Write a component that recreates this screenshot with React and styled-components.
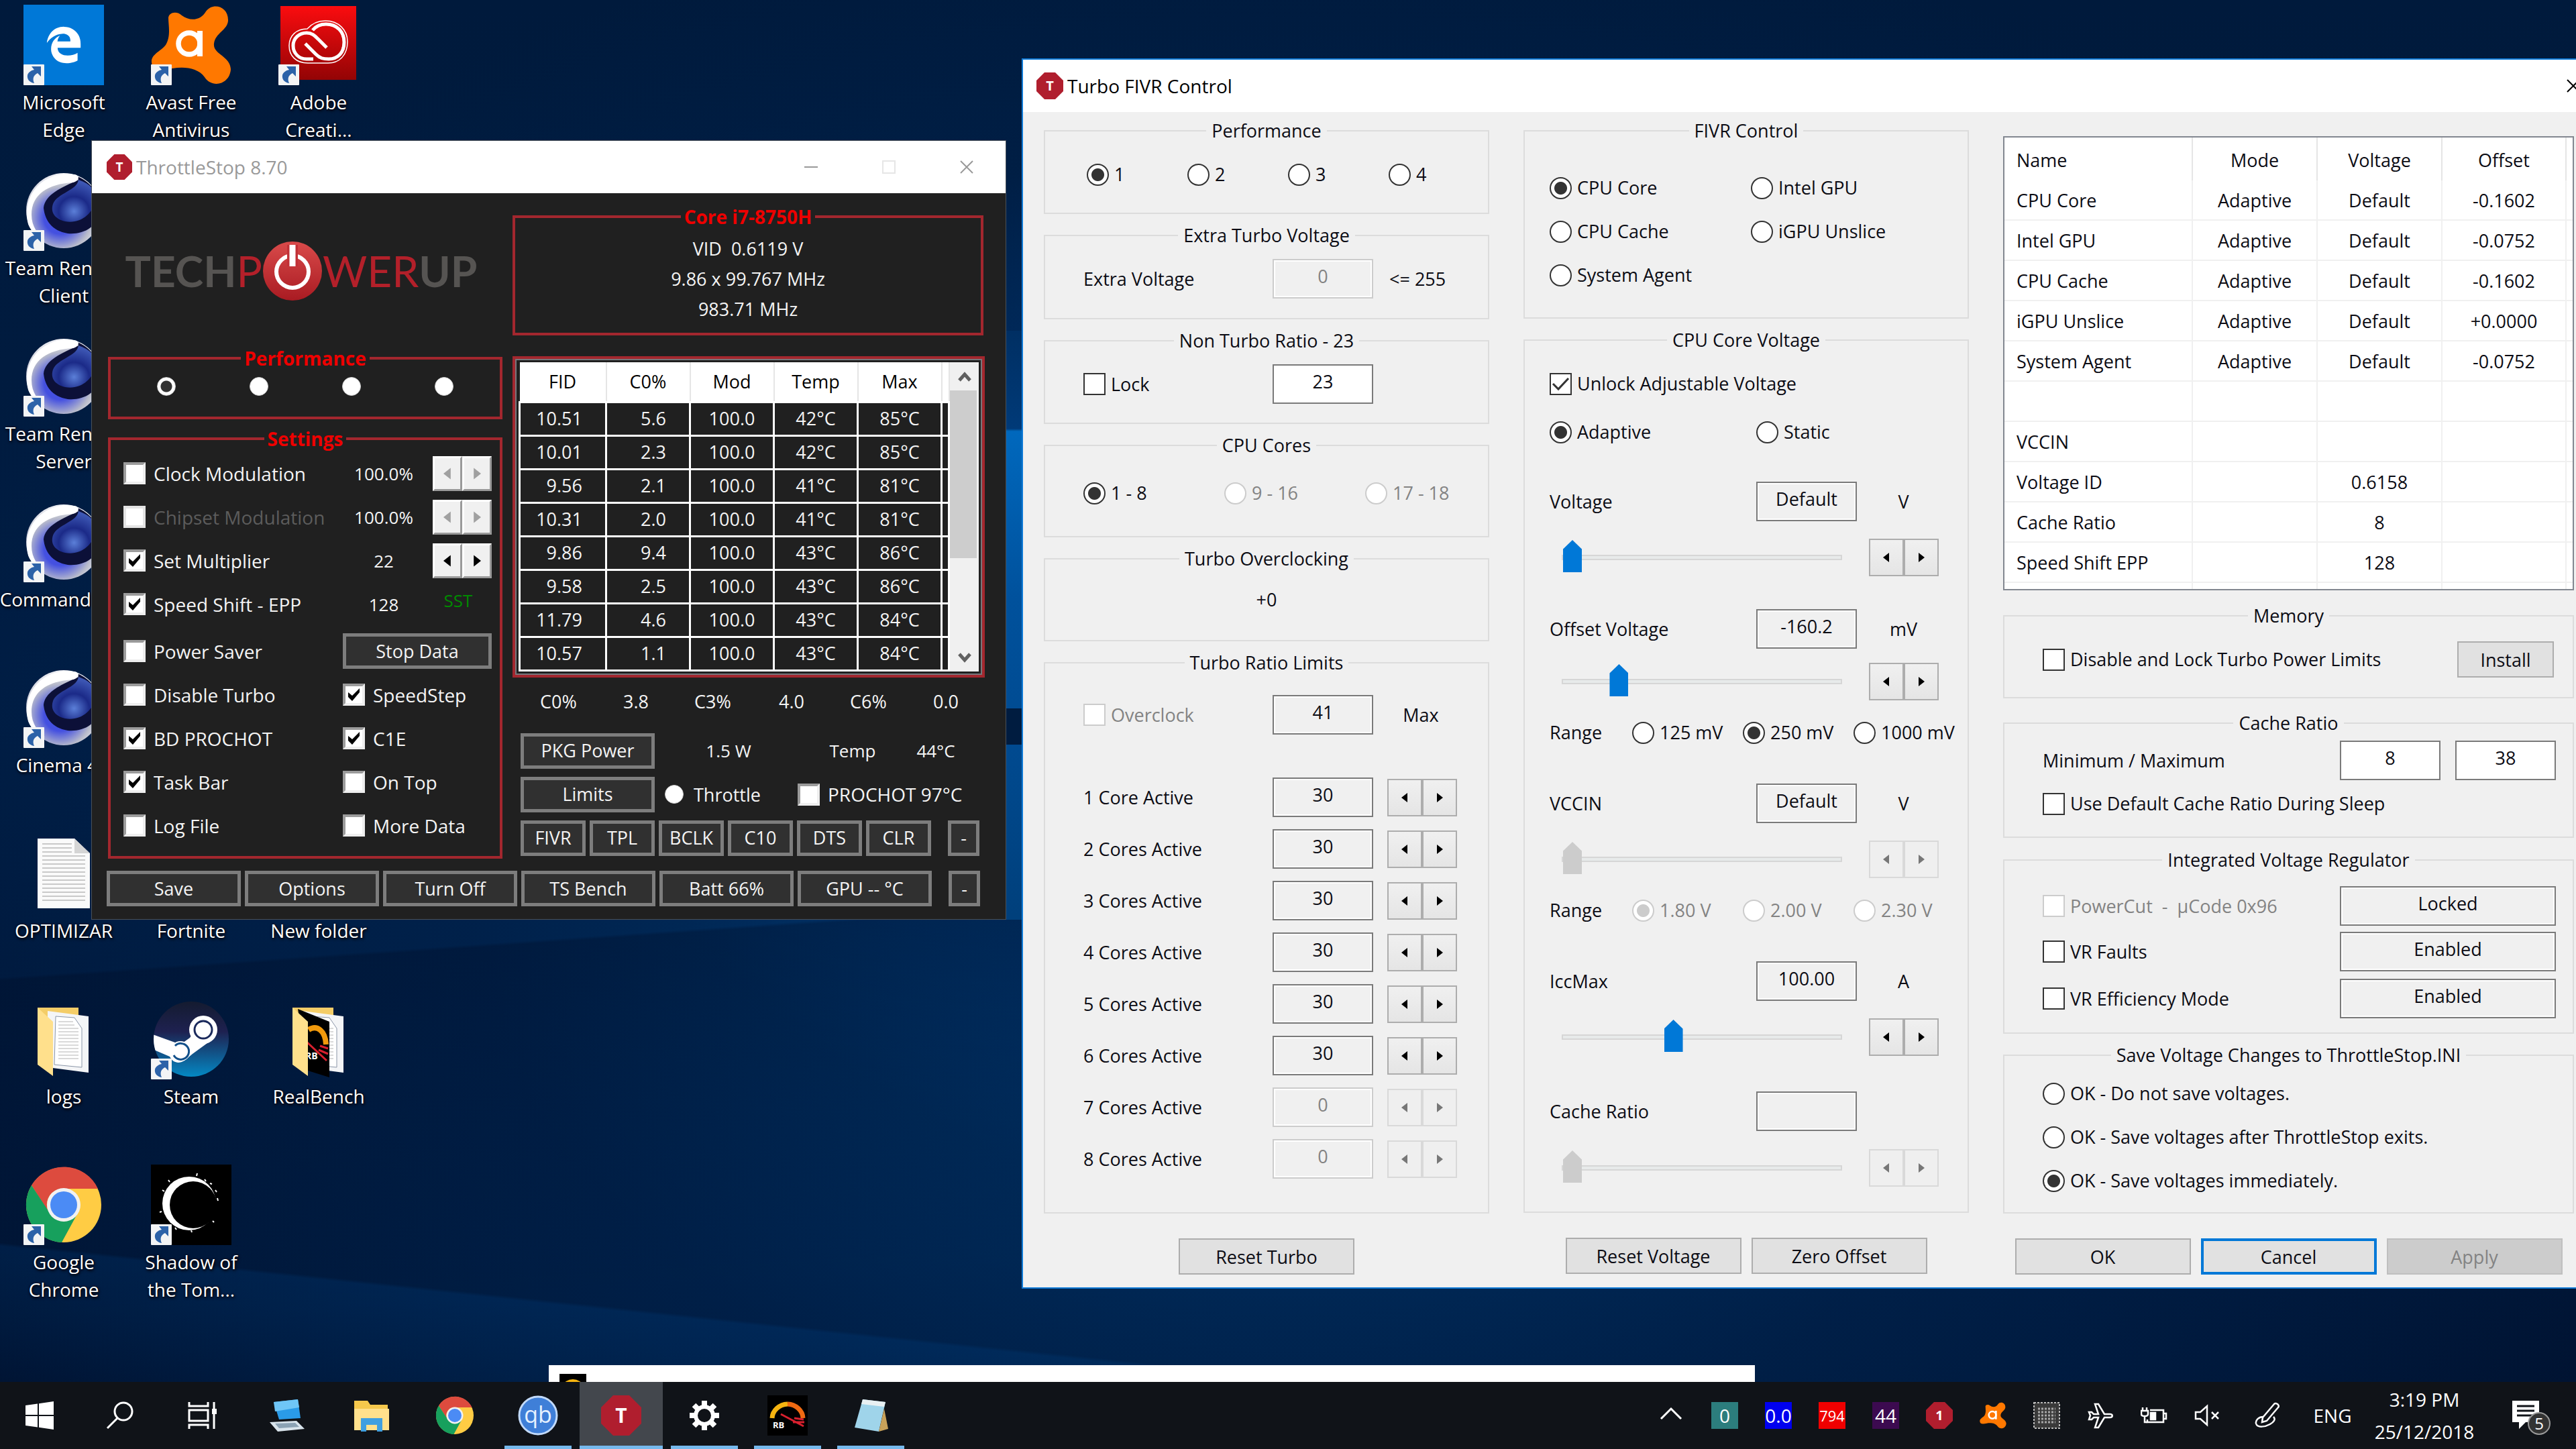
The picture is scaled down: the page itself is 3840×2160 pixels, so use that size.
import React from 'react';
import styled, { createGlobalStyle, css } from 'styled-components';
import { FaEdgeLegacy } from 'react-icons/fa';

const GlobalStyle = createGlobalStyle`
  * {
    box-sizing: border-box;
  }

  html,
  body {
    margin: 0;
    overflow: hidden;
    background: #001434;
  }

  body,
  button,
  input {
    font-family: 'Open Sans', 'Noto Sans', sans-serif;
    font-size: 27px;
  }
`;

/* ---------- desktop ---------- */

const Desktop = styled.main`
  position: relative;
  height: 100vh;
  min-height: 900px;
  overflow: hidden;
  background:
    linear-gradient(#001c40, #001c40) 1400px 1056px / 300px 54px no-repeat,
    linear-gradient(180deg, #002f63 0, #003a78 146px, #0068bd 150px, #00519c 400px, #004a90 620px, #00407c 870px) 1400px
      493px / 300px 878px no-repeat,
    linear-gradient(176deg, transparent 60%, rgba(0, 8, 30, 0.28) 60.2%, transparent 82%),
    linear-gradient(186deg, transparent 88%, rgba(0, 70, 140, 0.22) 88.2%, transparent 97%),
    radial-gradient(ellipse 1500px 900px at 62% 46%, #0068bd 0%, #00529c 40%, rgba(0, 52, 110, 0.6) 70%, transparent 100%),
    radial-gradient(ellipse 2200px 1500px at 50% 62%, #003a72 0%, rgba(0, 36, 80, 0.7) 55%, transparent 100%),
    linear-gradient(180deg, #001a3c 0%, #001c42 50%, #001230 100%);
`;

const IconGrid = styled.div`
  display: grid;
  grid-template-rows: repeat(8, 247px);
  grid-auto-columns: 190px;
  width: max-content;
`;

const Shortcut = styled.figure`
  grid-row: ${(p) => p.$row};
  grid-column: ${(p) => p.$col};
  display: flex;
  flex-direction: column;
  align-items: center;
  gap: 5px;
  margin: 0;
  padding-top: 7px;
`;

const IconBox = styled.div`
  position: relative;
  width: 120px;
  height: 120px;

  > svg {
    display: block;
    width: 120px;
    height: 120px;
  }
`;

const Badge = styled.span`
  position: absolute;
  left: 0;
  bottom: 0;
  width: 31px;
  height: 31px;
`;

const IconLabel = styled.figcaption`
  max-width: 210px;
  color: #fff;
  font-size: 28px;
  line-height: 41px;
  text-align: center;
  white-space: pre;
  text-shadow: 1px 2px 4px #000, 0 0 3px #000;
`;

const EdgeTile = styled.div`
  display: flex;
  align-items: center;
  justify-content: center;
  width: 120px;
  height: 120px;
  background: #0078d7;
  color: #fff;
  font-size: 56px;
`;

/* ---------- shared window parts ---------- */

const Window = styled.section`
  position: absolute;
  display: flex;
  flex-direction: column;
`;

const TitleBar = styled.header`
  display: flex;
  align-items: center;
  height: 78px;
  padding-left: ${(p) => p.$inset || 22}px;
  background: #fff;
`;

const Title = styled.h1`
  flex: 1;
  margin: 0 0 0 6px;
  font-size: 28px;
  font-weight: 400;
  color: ${(p) => (p.$inactive ? '#999' : '#000')};
`;

const CaptionButton = styled.button`
  display: flex;
  align-items: center;
  justify-content: center;
  width: ${(p) => p.$width || 116}px;
  height: 100%;
  padding: 0;
  border: 0;
  background: transparent;
  color: ${(p) => p.$color || '#999'};
`;

const Spin = styled.div`
  display: flex;
  justify-self: end;
  width: ${(p) => (p.$classic ? 88 : 104)}px;
  height: ${(p) => (p.$classic ? 52 : 56)}px;
`;

const SpinButton = styled.button`
  flex: 1;
  display: flex;
  align-items: center;
  justify-content: center;
  padding: 0;
  color: #000;

  &:disabled {
    color: #777;
  }

  ${(p) =>
    p.$classic
      ? css`
          border: 3px solid;
          border-color: #fff #9a9a9a #9a9a9a #fff;
          background: #f0f0f0;
          &:disabled {
            color: #a0a0a0;
          }

          svg {
            width: 12px;
            height: 20px;
          }
        `
      : css`
          border: 2px solid #adadad;
          background: linear-gradient(#f0f0f0, #e5e5e5);
          &:disabled {
            border-color: #d9d9d9;
            background: #efefef;
          }
        `}
`;

/* ---------- ThrottleStop ---------- */

const ThrottleWindow = styled(Window)`
  left: 136px;
  top: 209px;
  width: 1364px;
  border: 1px solid #4a5058;
  background: #202020;
  color: #f4f4f4;
`;

const ThrottleBody = styled.div`
  padding: 0 33px 19px 24px;
`;

const ThrottleColumns = styled.div`
  display: grid;
  grid-template-columns: 588px 1fr;
  gap: 15px;
`;

const ThrottleColumn = styled.div`
  display: flex;
  flex-direction: column;
  padding-top: ${(p) => p.$top || 0}px;
`;

const Brand = styled.div`
  display: flex;
  align-items: center;
  justify-content: center;
  height: 232px;
  margin-right: 12px;
  font-family: Lato, sans-serif;
  font-size: 64px;
  line-height: 64px;

  svg {
    width: 90px;
    height: 90px;
  }
`;

const BrandBold = styled.span`
  color: #565452;
  font-weight: 700;
`;

const BrandThin = styled.span`
  color: #b3202a;
  font-weight: 400;
`;

const RedFrame = styled.fieldset`
  min-width: 0;
  margin: 0 0 ${(p) => p.$after || 0}px;
  padding: 0;
  border: 4px solid #a3272e;

  legend {
    margin: 0 auto;
    padding: 0 5px;
    color: #ee0000;
    font-size: 28px;
    font-weight: 700;
    line-height: 28px;
  }
`;

const GroupBody = styled.div`
  padding: ${(p) => p.$pad};
`;

const ProfileRow = styled.div`
  display: flex;
  gap: 110px;
  height: 28px;
  align-items: center;
`;

const DarkRadio = styled.input`
  appearance: none;
  width: 28px;
  height: 28px;
  margin: 0;
  border-radius: 50%;
  border: 1px solid #ccc;
  background: #fff;

  &:checked {
    background: radial-gradient(circle, #333 0 8px, #fff 9px);
  }
`;

const SettingsRow = styled.div`
  display: grid;
  grid-template-columns: 1fr 122px 100px;
  align-items: center;
  height: 53px;
  margin-top: ${(p) => (p.$break ? 17 : 12)}px;

  &:first-of-type {
    margin-top: 0;
  }
`;

const DarkCheck = styled.label`
  display: flex;
  align-items: center;
  gap: 12px;
  font-size: 28px;
  line-height: 34px;
  white-space: nowrap;
  color: ${(p) => (p.$dim ? '#5c5c5c' : '#f4f4f4')};
  grid-column: ${(p) => p.$span || 'auto'};

  input[type='checkbox'] {
    appearance: none;
    width: 33px;
    height: 33px;
    margin: 0;
    border: 4px solid;
    border-color: #9b9b9b #eee #eee #9b9b9b;
    background: #fff;
  }

  input[type='checkbox']:disabled {
    border-color: #e4e4e4;
  }

  input[type='checkbox']:checked {
    background: #fff
      url("data:image/svg+xml,%3Csvg xmlns='http://www.w3.org/2000/svg' viewBox='0 0 25 25'%3E%3Cpath d='M4 9v7l6 6L21 9V3L10 14z' fill='%23000'/%3E%3C/svg%3E")
      center / contain no-repeat;
  }
`;

const Reading = styled.output`
  font-size: 26px;
  text-align: center;
  white-space: pre;
`;

const SpeedFlag = styled.span`
  justify-self: center;
  padding-bottom: 12px;
  color: #008a00;
  font-size: 26px;
`;

const DarkButton = styled.button`
  flex: none;
  width: ${(p) => p.$width || 200}px;
  height: 53px;
  padding: 0;
  border: 5px solid #7d7d7d;
  background: #303030;
  color: #f4f4f4;
  font-size: 27px;
  line-height: 40px;
  grid-column: ${(p) => p.$span || 'auto'};
`;

const CoreLine = styled.div`
  font-size: 27px;
  line-height: 45px;
  text-align: center;
  white-space: pre;
`;

const MonitorFrame = styled.div`
  display: flex;
  margin: 31px -2px 0 0;
  padding: 2px;
  border: 4px solid #a3272e;
  outline: 2px solid #77777c;
  outline-offset: -6px;
`;

const MonitorTable = styled.table`
  flex: 1;
  width: 100%;
  margin: 3px 0 3px 3px;
  border-collapse: collapse;
  table-layout: fixed;
  font-size: 27px;

  th {
    height: 59px;
    padding: 0;
    border-right: 2px solid #e5e5e5;
    background: #fff;
    color: #000;
    font-weight: 400;
  }

  td {
    height: 50px;
    padding: 0;
    border: 3px solid #fff;
    text-align: center;
    line-height: 30px;
  }

  td:nth-child(1),
  td:nth-child(2) {
    padding-right: 34px;
    text-align: right;
  }
`;

const ScrollTrack = styled.div`
  flex: none;
  display: flex;
  flex-direction: column;
  width: 43px;
  margin: 3px 3px 3px 0;
  background: #f0f0f0;
  color: #606060;

  svg {
    display: block;
    width: 22px;
    height: 42px;
    margin: 0 auto;
  }
`;

const ScrollThumb = styled.div`
  height: 250px;
  margin: 0 3px 0 0;
  background: #cdcdcd;
`;

const ScrollSpace = styled.div`
  flex: 1;
`;

const StateRow = styled.div`
  display: grid;
  grid-template-columns: 54px 176px 54px 178px 54px 1fr;
  margin: 16px 36px 0 41px;
  font-size: 27px;
  line-height: 40px;
`;

const StateValue = styled.output`
  padding-right: ${(p) => p.$gap || 68}px;
  text-align: right;
`;

const PowerRow = styled.div`
  display: grid;
  grid-template-columns: 200px ${(p) => p.$cols};
  align-items: center;
  height: 53px;
  margin: ${(p) => p.$top}px 0 0 12px;
`;

const ThrottleLabel = styled.label`
  display: flex;
  align-items: center;
  gap: 15px;
  padding-left: 15px;
`;

const ButtonRow = styled.div`
  display: flex;
  gap: ${(p) => p.$gap}px;
  margin: ${(p) => p.$margin};

  > :last-child {
    margin-left: 19px;
  }
`;

/* ---------- Turbo FIVR Control ---------- */

const FivrWindow = styled(Window)`
  left: 1523px;
  right: -32px;
  top: 87px;
  border: 2px solid #0f7ad6;
  background: #f0f0f0;
  color: #0c0c14;
`;

const FivrBody = styled.div`
  display: grid;
  grid-template-columns: 664fr 664fr 851fr;
  gap: 51px;
  padding: 14px 33px 19px 31px;
`;

const Column = styled.div`
  display: flex;
  flex-direction: column;
  min-width: 0;
`;

const GroupFrame = styled.fieldset`
  min-width: 0;
  margin: 0 0 ${(p) => p.$after || 18}px;
  padding: 0;
  border: 2px solid #dcdcdc;

  legend {
    margin: 0 auto;
    padding: 0 8px;
    line-height: 28px;
  }
`;

const Row = styled.div`
  display: grid;
  grid-template-columns: ${(p) => p.$cols || '1fr'};
  align-items: center;
  justify-content: start;
  height: ${(p) => p.$height || 52}px;
  margin-top: ${(p) => p.$top || 0}px;
  line-height: 36px;
`;

const WideRow = styled(Row)`
  justify-content: stretch;
`;

const CenterText = styled.span`
  text-align: center;
`;

const choiceBase = css`
  appearance: none;
  flex: none;
  width: 33px;
  height: 33px;
  margin: 0;
  border: 2px solid #333;
  background-color: #fff;
`;

const Choice = styled.label`
  display: flex;
  align-items: center;
  gap: 8px;
  white-space: pre;
  color: ${(p) => (p.$off ? '#838383' : 'inherit')};

  input[type='radio'] {
    ${choiceBase}
    border-radius: 50%;
  }

  input[type='radio']:checked {
    background-image: radial-gradient(circle, #333 0 9px, transparent 10px);
  }

  input[type='checkbox'] {
    ${choiceBase}
  }

  input[type='checkbox']:checked {
    background-image: url("data:image/svg+xml,%3Csvg xmlns='http://www.w3.org/2000/svg' viewBox='0 0 29 29'%3E%3Cpath d='M3 14l8 8L26 6' fill='none' stroke='%23333' stroke-width='3'/%3E%3C/svg%3E");
  }

  input:disabled {
    border-color: #ccc;
  }

  input[type='radio']:disabled:checked {
    background-image: radial-gradient(circle, #ccc 0 9px, transparent 10px);
  }
`;

const ValueBox = styled.input`
  width: ${(p) => p.$width || 150}px;
  height: 59px;
  padding: 0 0 9px;
  border: 2px solid #7a7a7a;
  background: ${(p) => (p.$editable ? '#fff' : '#f0f0f0')};
  box-shadow: inset 0 0 0 2px #fff;
  color: #0c0c14;
  text-align: center;

  &:disabled {
    border-color: #ccc;
    color: #838383;
  }
`;

const Slider = styled.input`
  appearance: none;
  width: 418px;
  height: 56px;
  margin: 0;
  background: transparent;

  &::-webkit-slider-runnable-track {
    height: 8px;
    border: 2px solid #d6d6d6;
    background: #e7eaea;
  }

  &::-webkit-slider-thumb {
    appearance: none;
    width: 28px;
    height: 48px;
    margin-top: -24px;
    background: ${(p) => (p.disabled ? '#ccc' : '#0078d7')};
    clip-path: polygon(50% 0, 100% 28%, 100% 100%, 0 100%, 0 28%);
  }
`;

const Push = styled.button`
  width: ${(p) => p.$width || 262}px;
  height: 54px;
  padding: 0;
  border: ${(p) => (p.$focus ? '4px solid #0078d7' : '2px solid #adadad')};
  background: #e1e1e1;
  color: #0c0c14;

  &:disabled {
    border-color: #bfbfbf;
    background: #ccc;
    color: #838383;
  }
`;

const Footer = styled.div`
  display: flex;
  justify-content: center;
  gap: 15px;
  margin-top: 19px;
`;

const VoltageTable = styled.table`
  width: 100%;
  margin: 22px 0 24px;
  border: 2px solid #828790;
  border-spacing: 0;
  table-layout: fixed;
  background: #fff;

  th {
    height: 64px;
    padding: 3px 0 0;
    border-right: 2px solid #e5e5e5;
    font-weight: 400;
  }

  td {
    height: 60px;
    padding: 0;
    border-right: 2px solid #f0f0f0;
    border-bottom: 2px solid #f0f0f0;
    text-align: center;
  }

  th:first-child,
  td:first-child {
    padding-left: 18px;
    text-align: left;
  }

  th:last-child,
  td:last-child {
    border-right: 0;
  }

  tfoot td {
    height: 9px;
    border-bottom: 0;
  }
`;

/* ---------- taskbar ---------- */

const Preview = styled.div`
  position: absolute;
  left: 818px;
  bottom: 100px;
  width: 1798px;
  height: 25px;
  padding: 13px 0 0 16px;
  overflow: hidden;
  background: #fff;
`;

const Taskbar = styled.footer`
  position: absolute;
  left: 0;
  right: 0;
  bottom: 0;
  display: flex;
  height: 100px;
  background: #101318;
  color: #fff;
`;

const TaskButton = styled.button`
  display: flex;
  align-items: center;
  justify-content: center;
  width: ${(p) => p.$width || 124}px;
  height: 100px;
  padding: 0;
  border: 0;
  background-color: ${(p) => (p.$active ? '#43474d' : 'transparent')};
  background-image: ${(p) => (p.$running ? 'linear-gradient(#76b9ed, #76b9ed)' : 'none')};
  background-size: ${(p) => (p.$active ? '100%' : '100px')} 5px;
  background-position: center bottom;
  background-repeat: no-repeat;
  color: #fff;

  svg {
    width: ${(p) => p.$icon || 60}px;
    height: ${(p) => p.$icon || 60}px;
  }
`;

const Tray = styled.div`
  display: flex;
  align-items: center;
  margin-left: auto;
`;

const TrayCell = styled.div`
  display: flex;
  align-items: center;
  justify-content: center;
  width: ${(p) => p.$width || 80}px;
  height: 100px;
  font-size: 28px;

  svg {
    width: ${(p) => p.$icon || 40}px;
    height: ${(p) => p.$icon || 40}px;
  }
`;

const Meter = styled.span`
  width: 40px;
  height: 40px;
  overflow: hidden;
  background: ${(p) => p.$bg};
  color: #fff;
  font-size: ${(p) => p.$size || 28}px;
  line-height: 40px;
  text-align: center;
`;

const Clock = styled.time`
  width: 182px;
  font-size: 28px;
  line-height: 48px;
  text-align: center;
`;

/* ---------- drawings ---------- */

const StopIcon = ({ size = 40, letter = 'T' }) => (
  <svg width={size} height={size} viewBox="0 0 40 40" aria-hidden="true">
    <path d="M12 0h16l12 12v16L28 40H12L0 28V12z" fill="#b01e2e" />
    <text x="20" y="27" textAnchor="middle" fill="#fff" fontSize="20" fontWeight="700" fontFamily="Open Sans">
      {letter}
    </text>
  </svg>
);

const ShortcutArrow = () => (
  <Badge>
    <svg width="31" height="31" viewBox="0 0 31 31" aria-hidden="true">
      <rect width="31" height="31" rx="1" fill="#f3f4f5" />
      <path d="M12 3H26V18L21 13C15 16 13 21 16 28C9 27 5 22 6 16C7 12 11 9 16 8Z" fill="#2c62a8" />
    </svg>
  </Badge>
);

const AvastMark = () => (
  <svg viewBox="0 0 120 120" aria-hidden="true">
    <path
      d="M26 19C28 10 40 10 46 16C58 25 74 24 82 10C92-4 116 2 115 24C114 38 96 42 94 58C92 74 118 76 119 96C118 118 92 126 80 108C70 94 50 92 32 95C16 98 2 100 1 86C0 74 14 70 22 60C30 46 26 32 26 19Z"
      fill="#ff7800"
    />
    <circle cx="57" cy="58" r="16" fill="none" stroke="#fff" strokeWidth="7.5" />
    <path d="M73 39v38" stroke="#fff" strokeWidth="8" />
  </svg>
);

const CloudMark = () => (
  <svg viewBox="0 0 120 120" aria-hidden="true">
    <defs>
      <linearGradient id="cc" x1="0" y1="0" x2="0" y2="1">
        <stop offset="0" stopColor="#fb0c0f" />
        <stop offset="1" stopColor="#930405" />
      </linearGradient>
    </defs>
    <rect x="3" y="2" width="113" height="110" fill="url(#cc)" />
    <g fill="none" stroke="#fff">
      <path d="M44 87C26 87 16 76 16 61C16 46 27 36 43 36C50 28 59 24 70 24C90 24 103 38 103 55C103 74 92 87 74 87Z" strokeWidth="1.5" />
      <path d="M52 81H42C30 81 22 72 22 61C22 50 31 42 42 42C51 42 55 47 59 51L72 64" strokeWidth="5" />
      <path d="M40 58L56 74C62 80 67 81 75 81C89 81 98 71 98 56C98 40 87 29 71 29C63 29 56 32 51 38" strokeWidth="5" />
    </g>
  </svg>
);

const CinemaMark = () => (
  <svg viewBox="0 0 120 120" aria-hidden="true">
    <defs>
      <radialGradient id="c4rim" cx="0.45" cy="0.6" r="0.6">
        <stop offset="0.35" stopColor="#4450e0" />
        <stop offset="0.7" stopColor="#b9bccb" />
        <stop offset="1" stopColor="#f4f4f8" />
      </radialGradient>
      <radialGradient id="c4eye" cx="0.5" cy="0.75" r="0.7">
        <stop offset="0" stopColor="#5b7fd8" />
        <stop offset="0.5" stopColor="#1b2a88" />
        <stop offset="1" stopColor="#3d57b4" />
      </radialGradient>
    </defs>
    <circle cx="60" cy="60" r="56" fill="url(#c4rim)" />
    <path d="M78 8C104 18 116 40 114 62C110 84 90 96 66 94C42 90 32 74 30 56C32 36 56 26 82 14Z" fill="#0c1038" />
    <path d="M82 14C100 20 108 30 108 42C104 66 84 80 62 76C46 72 40 62 44 50C50 34 80 30 82 14Z" fill="url(#c4eye)" />
    <path d="M6 76C-2 34 32 0 76 6C86 8 82 16 74 18C36 20 12 36 12 66C12 84 22 96 32 104C18 98 8 88 6 76Z" fill="#fff" />
  </svg>
);

const DocMark = () => (
  <svg viewBox="0 0 120 120" aria-hidden="true">
    <path d="M21 8H76L99 30V112H21Z" fill="#fafafa" />
    <path d="M76 8V30H99Z" fill="#d5d5d5" />
    <path d="M28 16H72M28 22H72M28 28H72M28 34H92M28 40H92M28 46H92M28 52H92M28 58H92M28 64H92M28 70H92M28 76H92M28 82H92M28 88H92M28 94H92M28 100H92" stroke="#b9b9b9" strokeWidth="1.5" />
  </svg>
);

const FolderMark = ({ dark }) => (
  <svg viewBox="0 0 120 120" aria-hidden="true">
    <path d="M21 13H82V105L50 100L21 98Z" fill="#f4cd68" />
    <path d="M36 18L97 26V110L36 102Z" fill="#f4f5f7" />
    <path d="M48 26L76 28L87 44V102L46 98Z" fill="#fff" stroke="#8b96a8" strokeWidth="1" />
    <path d="M52 34H74M52 39H76M52 44H82M52 49H82M52 54H82M52 59H82M52 64H82M52 69H82M52 74H82M52 79H82M52 84H82M52 89H82" stroke="#b4b4b4" strokeWidth="1.2" />
    {dark && (
      <g>
        <path d="M29 15L76 34V117L44 107Z" fill="#000" />
        <path d="M45 46C58 38 70 48 71 68" fill="none" stroke="#f29a0c" strokeWidth="8" />
        <path d="M42 64L72 92M60 76L74 82M62 70L74 74" stroke="#d8202e" strokeWidth="3" />
        <text x="40" y="90" fill="#fff" fontSize="14" fontWeight="700" fontFamily="Open Sans">RB</text>
      </g>
    )}
    <path d="M21 13L44 34V115L21 98Z" fill="#ffe08c" />
  </svg>
);

const SteamMark = () => (
  <svg viewBox="0 0 120 120" aria-hidden="true">
    <defs>
      <linearGradient id="st" x1="0" y1="0" x2="0" y2="1">
        <stop offset="0" stopColor="#141b30" />
        <stop offset="0.4" stopColor="#1e2150" />
        <stop offset="1" stopColor="#0489c4" />
      </linearGradient>
      <clipPath id="stc">
        <circle cx="60" cy="60" r="56" />
      </clipPath>
    </defs>
    <circle cx="60" cy="60" r="56" fill="url(#st)" />
    <g clipPath="url(#stc)">
      <path d="M0 52L44 68L58 58L68 42L84 66L62 82L50 92C40 98 32 94 28 86L0 74Z" fill="#fff" />
      <circle cx="78" cy="46" r="21" fill="#fff" />
      <circle cx="78" cy="46" r="13" fill="#fff" stroke="#1b2a5c" strokeWidth="3" />
      <circle cx="44" cy="78" r="15" fill="#fff" />
      <path d="M36 70A12 12 0 1 1 34 84" fill="none" stroke="#12508a" strokeWidth="3" />
    </g>
  </svg>
);

const ChromeMark = () => (
  <svg viewBox="0 0 120 120" aria-hidden="true">
    <circle cx="60" cy="60" r="56" fill="#fc4" />
    <path d="M12 31A56 56 0 0 1 111 36H60A24 24 0 0 0 38 72Z" fill="#dd4b3e" />
    <path d="M12 31L39 72A24 24 0 0 0 68 83L81 72L57 116A56 56 0 0 1 12 31Z" fill="#17a05d" />
    <circle cx="60" cy="60" r="25" fill="#f1f1f1" />
    <circle cx="60" cy="60" r="20" fill="#4b8bf5" />
  </svg>
);

const EclipseMark = () => (
  <svg viewBox="0 0 120 120" aria-hidden="true">
    <rect width="120" height="120" fill="#000" />
    <circle cx="57" cy="58" r="40" fill="#fff" />
    <circle cx="63" cy="60" r="35" fill="#000" />
    <path d="M80 22l2 3M88 28l3 1M96 38l2 3M99 50l1 4M92 84l2 2M36 94l2 3M60 98l1 3M20 40l-3-2M16 70l-3 1M68 17l1-4M28 26l-2-3" stroke="#fff" strokeWidth="2" />
  </svg>
);

const PowerMark = () => (
  <svg viewBox="0 0 90 90" aria-hidden="true">
    <defs>
      <linearGradient id="pw" x1="0" y1="0" x2="0" y2="1">
        <stop offset="0" stopColor="#d94a4a" />
        <stop offset="1" stopColor="#a91b22" />
      </linearGradient>
    </defs>
    <circle cx="45" cy="45" r="44" fill="url(#pw)" />
    <circle cx="45" cy="46" r="24" fill="none" stroke="#fff" strokeWidth="6" />
    <path d="M45 6V38" stroke="#c13036" strokeWidth="16" />
    <path d="M45 6V38" stroke="#fff" strokeWidth="9" />
  </svg>
);

const GaugeMark = () => (
  <svg viewBox="0 0 60 60" aria-hidden="true">
    <rect width="60" height="60" fill="#000" />
    <path d="M7 34A24 22 0 0 1 30 13" fill="none" stroke="#f6b410" strokeWidth="7" />
    <path d="M30 13A24 22 0 0 1 53 34" fill="none" stroke="#f06a12" strokeWidth="7" />
    <path d="M20 28L54 46M38 40L55 40M40 34L54 36" stroke="#d8202e" strokeWidth="3" />
    <text x="8" y="49" fill="#fff" fontSize="13" fontWeight="700" fontFamily="Open Sans">RB</text>
  </svg>
);

const Arrows = ({ classic, disabled, name }) => (
  <Spin $classic={classic}>
    <SpinButton $classic={classic} disabled={disabled} aria-label={`Decrease ${name}`}>
      <svg width="10" height="14" viewBox="0 0 10 14" aria-hidden="true">
        <path d="M9 0V14L0 7Z" fill="currentColor" />
      </svg>
    </SpinButton>
    <SpinButton $classic={classic} disabled={disabled} aria-label={`Increase ${name}`}>
      <svg width="10" height="14" viewBox="0 0 10 14" aria-hidden="true">
        <path d="M1 0V14L10 7Z" fill="currentColor" />
      </svg>
    </SpinButton>
  </Spin>
);

const CloseGlyph = () => (
  <svg width="20" height="20" viewBox="0 0 20 20" aria-hidden="true">
    <path d="M1 1L19 19M19 1L1 19" stroke="currentColor" strokeWidth="2" />
  </svg>
);

/* ---------- data ---------- */

const shortcuts = [
  { col: 1, row: 1, label: 'Microsoft\nEdge', icon: <EdgeTile><FaEdgeLegacy /></EdgeTile>, link: true },
  { col: 1, row: 2, label: 'Team Render\nClient', icon: <CinemaMark />, link: true },
  { col: 1, row: 3, label: 'Team Render\nServer', icon: <CinemaMark />, link: true },
  { col: 1, row: 4, label: 'CommandLine', icon: <CinemaMark />, link: true },
  { col: 1, row: 5, label: 'Cinema 4D', icon: <CinemaMark />, link: true },
  { col: 1, row: 6, label: 'OPTIMIZAR', icon: <DocMark /> },
  { col: 1, row: 7, label: 'logs', icon: <FolderMark /> },
  { col: 1, row: 8, label: 'Google\nChrome', icon: <ChromeMark />, link: true },
  { col: 2, row: 1, label: 'Avast Free\nAntivirus', icon: <AvastMark />, link: true },
  { col: 2, row: 6, label: 'Fortnite' },
  { col: 2, row: 7, label: 'Steam', icon: <SteamMark />, link: true },
  { col: 2, row: 8, label: 'Shadow of\nthe Tom...', icon: <EclipseMark />, link: true },
  { col: 3, row: 1, label: 'Adobe\nCreati...', icon: <CloudMark />, link: true },
  { col: 3, row: 6, label: 'New folder' },
  { col: 3, row: 7, label: 'RealBench', icon: <FolderMark dark /> },
];

const modulation = [
  { label: 'Clock Modulation', value: '100.0%', disabled: true },
  { label: 'Chipset Modulation', value: '100.0%', disabled: true, dim: true },
  { label: 'Set Multiplier', value: '22', on: true },
];

const toggles = [
  [{ label: 'Disable Turbo' }, { label: 'SpeedStep', on: true }],
  [{ label: 'BD PROCHOT', on: true }, { label: 'C1E', on: true }],
  [{ label: 'Task Bar', on: true }, { label: 'On Top' }],
  [{ label: 'Log File' }, { label: 'More Data' }],
];

const threads = [
  ['10.51', '5.6', '100.0', '42°C', '85°C'],
  ['10.01', '2.3', '100.0', '42°C', '85°C'],
  ['9.56', '2.1', '100.0', '41°C', '81°C'],
  ['10.31', '2.0', '100.0', '41°C', '81°C'],
  ['9.86', '9.4', '100.0', '43°C', '86°C'],
  ['9.58', '2.5', '100.0', '43°C', '86°C'],
  ['11.79', '4.6', '100.0', '43°C', '84°C'],
  ['10.57', '1.1', '100.0', '43°C', '84°C'],
];

const voltages = [
  ['CPU Core', 'Adaptive', 'Default', '-0.1602'],
  ['Intel GPU', 'Adaptive', 'Default', '-0.0752'],
  ['CPU Cache', 'Adaptive', 'Default', '-0.1602'],
  ['iGPU Unslice', 'Adaptive', 'Default', '+0.0000'],
  ['System Agent', 'Adaptive', 'Default', '-0.0752'],
  ['', '', '', ''],
  ['VCCIN', '', '', ''],
  ['Voltage ID', '', '0.6158', ''],
  ['Cache Ratio', '', '8', ''],
  ['Speed Shift EPP', '', '128', ''],
];

const coreRatios = [30, 30, 30, 30, 30, 30, 0, 0];

/* ---------- pieces ---------- */

const Group = ({ title, pad, after, children }) => (
  <GroupFrame $after={after}>
    <legend>{title}</legend>
    <GroupBody $pad={pad}>{children}</GroupBody>
  </GroupFrame>
);

const RedGroup = ({ title, pad, after, children }) => (
  <RedFrame $after={after}>
    <legend>{title}</legend>
    <GroupBody $pad={pad}>{children}</GroupBody>
  </RedFrame>
);

const Radio = ({ name, label, checked, disabled }) => (
  <Choice $off={disabled}>
    <input type="radio" name={name} defaultChecked={checked} disabled={disabled} />
    {label}
  </Choice>
);

const Check = ({ label, checked, disabled }) => (
  <Choice $off={disabled}>
    <input type="checkbox" defaultChecked={checked} disabled={disabled} />
    {label}
  </Choice>
);

const Toggle = ({ label, on, dim, span }) => (
  <DarkCheck $dim={dim} $span={span}>
    <input type="checkbox" defaultChecked={on} disabled={dim} />
    {label}
  </DarkCheck>
);

const VoltageControl = ({ label, value, unit, position, disabled, top, mid }) => (
  <>
    <Row $cols="308px 150px 139px" $height={59} $top={top}>
      <label htmlFor={`box-${label}`}>{label}</label>
      <ValueBox id={`box-${label}`} readOnly defaultValue={value} />
      <CenterText>{unit}</CenterText>
    </Row>
    <Row $cols="18px 458px 104px" $height={56} $top={mid}>
      <span />
      <Slider type="range" aria-label={label} defaultValue={position} disabled={disabled} />
      <Arrows name={label} disabled={disabled} />
    </Row>
  </>
);

function ThrottleStop() {
  return (
    <ThrottleWindow>
      <TitleBar>
        <StopIcon size={38} />
        <Title $inactive>ThrottleStop 8.70</Title>
        <CaptionButton aria-label="Minimize">
          <svg width="20" height="20" viewBox="0 0 20 20" aria-hidden="true">
            <path d="M0 10H20" stroke="currentColor" strokeWidth="2" />
          </svg>
        </CaptionButton>
        <CaptionButton $color="#e6e6e6" aria-label="Maximize">
          <svg width="20" height="20" viewBox="0 0 20 20" aria-hidden="true">
            <rect x="1" y="1" width="18" height="18" fill="none" stroke="currentColor" strokeWidth="2" />
          </svg>
        </CaptionButton>
        <CaptionButton aria-label="Close">
          <CloseGlyph />
        </CaptionButton>
      </TitleBar>
      <ThrottleBody>
        <ThrottleColumns>
          <ThrottleColumn>
            <Brand>
              <BrandBold>TECH</BrandBold>
              <BrandThin>P</BrandThin>
              <PowerMark />
              <BrandThin>WER</BrandThin>
              <BrandBold>UP</BrandBold>
            </Brand>
            <RedGroup title="Performance" pad="14px 0 31px 69px" after={15}>
              <ProfileRow>
                {[1, 2, 3, 4].map((n) => (
                  <DarkRadio key={n} type="radio" name="profile" aria-label={`Profile ${n}`} defaultChecked={n === 1} />
                ))}
              </ProfileRow>
            </RedGroup>
            <RedGroup title="Settings" pad="11px 12px 19px 19px">
              {modulation.map((m) => (
                <SettingsRow key={m.label}>
                  <Toggle {...m} />
                  <Reading>{m.value}</Reading>
                  <Arrows classic name={m.label} disabled={m.disabled} />
                </SettingsRow>
              ))}
              <SettingsRow>
                <Toggle label="Speed Shift - EPP" on />
                <Reading>128</Reading>
                <SpeedFlag>SST</SpeedFlag>
              </SettingsRow>
              <SettingsRow $break>
                <Toggle label="Power Saver" />
                <DarkButton $width={222} $span="2 / 4">Stop Data</DarkButton>
              </SettingsRow>
              {toggles.map(([left, right]) => (
                <SettingsRow key={left.label}>
                  <Toggle {...left} />
                  <Toggle {...right} span="2 / 4" />
                </SettingsRow>
              ))}
            </RedGroup>
          </ThrottleColumn>

          <ThrottleColumn $top={21}>
            <RedGroup title="Core i7-8750H" pad="11px 0 13px">
              <CoreLine>VID  0.6119 V</CoreLine>
              <CoreLine>9.86 x 99.767 MHz</CoreLine>
              <CoreLine>983.71 MHz</CoreLine>
            </RedGroup>
            <MonitorFrame>
              <MonitorTable>
                <colgroup>
                  <col width="129" />
                  <col width="125" />
                  <col width="125" />
                  <col width="125" />
                  <col width="125" />
                  <col />
                </colgroup>
                <thead>
                  <tr>
                    <th>FID</th>
                    <th>C0%</th>
                    <th>Mod</th>
                    <th>Temp</th>
                    <th>Max</th>
                    <th aria-label="More" />
                  </tr>
                </thead>
                <tbody>
                  {threads.map((t, i) => (
                    <tr key={i}>
                      {t.map((v, j) => (
                        <td key={j}>{v}</td>
                      ))}
                      <td />
                    </tr>
                  ))}
                </tbody>
              </MonitorTable>
              <ScrollTrack>
                <svg viewBox="0 0 22 42" aria-hidden="true">
                  <path d="M3 27L11 18L19 27" fill="none" stroke="currentColor" strokeWidth="5" />
                </svg>
                <ScrollThumb />
                <ScrollSpace />
                <svg viewBox="0 0 22 42" aria-hidden="true">
                  <path d="M3 16L11 25L19 16" fill="none" stroke="currentColor" strokeWidth="5" />
                </svg>
              </ScrollTrack>
            </MonitorFrame>
            <StateRow>
              <span>C0%</span>
              <StateValue>3.8</StateValue>
              <span>C3%</span>
              <StateValue>4.0</StateValue>
              <span>C6%</span>
              <StateValue $gap={1}>0.0</StateValue>
            </StateRow>
            <PowerRow $cols="220px 150px 98px" $top={27}>
              <DarkButton>PKG Power</DarkButton>
              <Reading>1.5 W</Reading>
              <Reading as="span">Temp</Reading>
              <Reading>44°C</Reading>
            </PowerRow>
            <PowerRow $cols="213px 1fr" $top={12}>
              <DarkButton>Limits</DarkButton>
              <ThrottleLabel>
                <DarkRadio type="radio" name="throttle" />
                Throttle
              </ThrottleLabel>
              <Toggle label="PROCHOT 97°C" />
            </PowerRow>
            <ButtonRow $gap={6} $margin="12px 0 0 12px">
              {['FIVR', 'TPL', 'BCLK', 'C10', 'DTS', 'CLR'].map((b) => (
                <DarkButton key={b} $width={97}>{b}</DarkButton>
              ))}
              <DarkButton $width={47}>-</DarkButton>
            </ButtonRow>
          </ThrottleColumn>
        </ThrottleColumns>
        <ButtonRow $gap={6} $margin="18px 0 0 -2px">
          {['Save', 'Options', 'Turn Off', 'TS Bench', 'Batt 66%', 'GPU -- °C'].map((b) => (
            <DarkButton key={b}>{b}</DarkButton>
          ))}
          <DarkButton $width={47}>-</DarkButton>
        </ButtonRow>
      </ThrottleBody>
    </ThrottleWindow>
  );
}

function TurboColumn() {
  return (
    <Column>
      <Group title="Performance" pad="25px 0 31px 62px">
        <Row $cols="repeat(4, 150px)">
          {['1', '2', '3', '4'].map((n) => (
            <Radio key={n} name="perf" label={n} checked={n === '1'} />
          ))}
        </Row>
      </Group>
      <Group title="Extra Turbo Voltage" pad="21px 0 29px 57px">
        <Row $cols="282px 174px auto" $height={59}>
          <label htmlFor="extra">Extra Voltage</label>
          <ValueBox id="extra" disabled defaultValue="0" />
          <span>&lt;= 255</span>
        </Row>
      </Group>
      <Group title="Non Turbo Ratio - 23" pad="21px 0 28px 57px">
        <Row $cols="282px 150px" $height={59}>
          <Check label="Lock" />
          <ValueBox $editable aria-label="Non turbo ratio" defaultValue="23" />
        </Row>
      </Group>
      <Group title="CPU Cores" pad="31px 0 38px 57px">
        <Row $cols="repeat(3, 210px)">
          <Radio name="cores" label="1 - 8" checked />
          <Radio name="cores" label="9 - 16" disabled />
          <Radio name="cores" label="17 - 18" disabled />
        </Row>
      </Group>
      <Group title="Turbo Overclocking" pad="21px 0 34px">
        <WideRow>
          <CenterText>+0</CenterText>
        </WideRow>
      </Group>
      <Group title="Turbo Ratio Limits" pad="34px 0 50px 57px">
        <Row $cols="282px 150px 142px" $height={59}>
          <Check label="Overclock" disabled />
          <ValueBox readOnly aria-label="Maximum ratio" defaultValue="41" />
          <CenterText>Max</CenterText>
        </Row>
        {coreRatios.map((ratio, i) => (
          <Row key={i} $cols="282px 171px 104px" $height={59} $top={i === 0 ? 64 : 18}>
            <label htmlFor={`ratio-${i}`}>{i === 0 ? '1 Core Active' : `${i + 1} Cores Active`}</label>
            <ValueBox id={`ratio-${i}`} readOnly disabled={!ratio} defaultValue={ratio} />
            <Arrows name={`ratio ${i + 1}`} disabled={!ratio} />
          </Row>
        ))}
      </Group>
      <Footer>
        <Push>Reset Turbo</Push>
      </Footer>
    </Column>
  );
}

function VoltageColumn() {
  return (
    <Column>
      <Group title="FIVR Control" pad="45px 0 37px 37px">
        <Row $cols="300px auto">
          <Radio name="plane" label="CPU Core" checked />
          <Radio name="plane" label="Intel GPU" />
        </Row>
        <Row $cols="300px auto" $top={13}>
          <Radio name="plane" label="CPU Cache" />
          <Radio name="plane" label="iGPU Unslice" />
        </Row>
        <Row $top={13}>
          <Radio name="plane" label="System Agent" />
        </Row>
      </Group>
      <Group title="CPU Core Voltage" pad="25px 0 37px 37px">
        <Row>
          <Check label="Unlock Adjustable Voltage" checked />
        </Row>
        <Row $cols="308px auto" $top={20}>
          <Radio name="mode" label="Adaptive" checked />
          <Radio name="mode" label="Static" />
        </Row>
        <VoltageControl label="Voltage" value="Default" unit="V" position={0} top={48} mid={26} />
        <VoltageControl label="Offset Voltage" value="-160.2" unit="mV" position={18} top={49} mid={21} />
        <Row $cols="123px 165px 165px auto" $top={22}>
          <span>Range</span>
          <Radio name="range" label="125 mV" />
          <Radio name="range" label="250 mV" checked />
          <Radio name="range" label="1000 mV" />
        </Row>
        <VoltageControl label="VCCIN" value="Default" unit="V" position={0} disabled top={50} mid={26} />
        <Row $cols="123px 165px 165px auto" $top={22}>
          <span>Range</span>
          <Radio name="vrange" label="1.80 V" checked disabled />
          <Radio name="vrange" label="2.00 V" disabled />
          <Radio name="vrange" label="2.30 V" disabled />
        </Row>
        <VoltageControl label="IccMax" value="100.00" unit="A" position={39} top={50} mid={26} />
        <VoltageControl label="Cache Ratio" value="" unit="" position={0} disabled top={53} mid={27} />
      </Group>
      <Footer>
        <Push>Reset Voltage</Push>
        <Push>Zero Offset</Push>
      </Footer>
    </Column>
  );
}

function SummaryColumn() {
  return (
    <Column>
      <VoltageTable>
        <colgroup>
          <col width="281" />
          <col width="186" />
          <col width="186" />
          <col width="185" />
          <col />
        </colgroup>
        <thead>
          <tr>
            <th>Name</th>
            <th>Mode</th>
            <th>Voltage</th>
            <th>Offset</th>
            <th aria-label="More" />
          </tr>
        </thead>
        <tbody>
          {voltages.map((v, i) => (
            <tr key={i}>
              {v.map((cell, j) => (
                <td key={j}>{cell}</td>
              ))}
              <td />
            </tr>
          ))}
        </tbody>
        <tfoot>
          <tr>
            <td />
            <td />
            <td />
            <td />
            <td />
          </tr>
        </tfoot>
      </VoltageTable>
      <Group title="Memory" pad="24px 28px 29px 57px" after={23}>
        <WideRow $cols="1fr 144px" $height={54}>
          <Check label="Disable and Lock Turbo Power Limits" />
          <Push $width={144}>Install</Push>
        </WideRow>
      </Group>
      <Group title="Cache Ratio" pad="12px 25px 23px 57px" after={19}>
        <WideRow $cols="1fr 172px 150px" $height={59}>
          <span>Minimum / Maximum</span>
          <ValueBox $editable aria-label="Minimum cache ratio" defaultValue="8" />
          <ValueBox $editable aria-label="Maximum cache ratio" defaultValue="38" />
        </WideRow>
        <Row $top={9}>
          <Check label="Use Default Cache Ratio During Sleep" />
        </Row>
      </Group>
      <Group title="Integrated Voltage Regulator" pad="25px 25px 21px 57px">
        <WideRow $cols="1fr 322px" $height={59}>
          <Check label="PowerCut  -  µCode 0x96" disabled />
          <ValueBox $width={322} readOnly aria-label="PowerCut state" defaultValue="Locked" />
        </WideRow>
        <WideRow $cols="1fr 322px" $height={59} $top={9}>
          <Check label="VR Faults" />
          <ValueBox $width={322} readOnly aria-label="VR Faults state" defaultValue="Enabled" />
        </WideRow>
        <WideRow $cols="1fr 322px" $height={59} $top={11}>
          <Check label="VR Efficiency Mode" />
          <ValueBox $width={322} readOnly aria-label="VR Efficiency state" defaultValue="Enabled" />
        </WideRow>
      </Group>
      <Group title="Save Voltage Changes to ThrottleStop.INI" pad="17px 0 21px 57px">
        <Row>
          <Radio name="save" label="OK - Do not save voltages." />
        </Row>
        <Row $top={13}>
          <Radio name="save" label="OK - Save voltages after ThrottleStop exits." />
        </Row>
        <Row $top={13}>
          <Radio name="save" label="OK - Save voltages immediately." checked />
        </Row>
      </Group>
      <Footer>
        <Push>OK</Push>
        <Push $focus>Cancel</Push>
        <Push disabled>Apply</Push>
      </Footer>
    </Column>
  );
}

function TaskbarArea() {
  return (
    <Taskbar>
      <TaskButton $width={118} $icon={42} aria-label="Start">
        <svg viewBox="0 0 42 42" aria-hidden="true">
          <path d="M0 6L18 3.5V20H0ZM20 3.2L42 0V20H20ZM0 22H18V38.5L0 36ZM20 22H42V42L20 38.8Z" fill="#fff" />
        </svg>
      </TaskButton>
      <TaskButton $width={122} $icon={44} aria-label="Search">
        <svg viewBox="0 0 44 44" fill="none" stroke="#fff" strokeWidth="3" aria-hidden="true">
          <circle cx="27" cy="16" r="13" />
          <path d="M18 26L3 41" />
        </svg>
      </TaskButton>
      <TaskButton $icon={44} aria-label="Task View">
        <svg viewBox="0 0 44 44" fill="none" stroke="#fff" strokeWidth="3" aria-hidden="true">
          <path d="M2 2V8H30V2M2 42V36H30V42M2 14H30V30H2ZM39 2V42" />
          <path d="M36 12H43V20H36Z" fill="#fff" stroke="none" />
        </svg>
      </TaskButton>
      <TaskButton $width={128} aria-label="This PC">
        <svg viewBox="0 0 60 60" aria-hidden="true">
          <path d="M10 10L46 6L50 34L18 36Z" fill="#2a9be8" />
          <path d="M10 10L46 6L48 18L12 24Z" fill="#6fc6f7" />
          <path d="M4 40L44 38L56 50L16 54Z" fill="#d9e4ec" />
          <path d="M12 42L42 41L48 47L18 49Z" fill="#8ba2b4" />
        </svg>
      </TaskButton>
      <TaskButton aria-label="File Explorer">
        <svg viewBox="0 0 60 60" aria-hidden="true">
          <path d="M4 8H24L28 14H54V50H4Z" fill="#f5c84c" />
          <path d="M4 20H56V52H4Z" fill="#ffe08c" />
          <path d="M14 34H46V54H38V44H22V54H14Z" fill="#3f9fe0" />
        </svg>
      </TaskButton>
      <TaskButton aria-label="Chrome">
        <ChromeMark />
      </TaskButton>
      <TaskButton $running aria-label="qBittorrent">
        <svg viewBox="0 0 60 60" aria-hidden="true">
          <circle cx="30" cy="30" r="28" fill="#3f7fd8" stroke="#c2dafa" strokeWidth="3" />
          <text x="30" y="41" textAnchor="middle" fill="#e6f1ff" fontSize="34" fontFamily="Open Sans">qb</text>
        </svg>
      </TaskButton>
      <TaskButton $running $active aria-label="ThrottleStop">
        <StopIcon size={60} />
      </TaskButton>
      <TaskButton $running $icon={48} aria-label="Settings">
        <svg viewBox="0 0 48 48" fill="none" stroke="#fff" aria-hidden="true">
          <circle cx="24" cy="24" r="13" strokeWidth="6" />
          <path d="M24 2V10M24 38V46M2 24H10M38 24H46M8.500 8.500L14 14M34 34L39.500 39.500M39.500 8.500L34 14M14 34L8.500 39.500" strokeWidth="8" />
        </svg>
      </TaskButton>
      <TaskButton $running aria-label="RealBench">
        <GaugeMark />
      </TaskButton>
      <TaskButton $running aria-label="Notepad">
        <svg viewBox="0 0 60 60" aria-hidden="true">
          <path d="M18 6L52 10L42 54L6 48Z" fill="#9fd4ea" />
          <path d="M18 6L52 10L50 17L16 13Z" fill="#e8f0f2" />
          <path d="M42 54L50 20L56 50Z" fill="#c9a25a" />
        </svg>
      </TaskButton>
      <Tray>
        <TrayCell>
          <svg viewBox="0 0 40 40" fill="none" stroke="#fff" strokeWidth="3" aria-hidden="true">
            <path d="M5 25L20 10L35 25" />
          </svg>
        </TrayCell>
        <TrayCell><Meter $bg="#2c7d7d">0</Meter></TrayCell>
        <TrayCell><Meter $bg="#0000f0">0.0</Meter></TrayCell>
        <TrayCell><Meter $bg="#f00000" $size={22}>794</Meter></TrayCell>
        <TrayCell><Meter $bg="#3c0a50">44</Meter></TrayCell>
        <TrayCell><StopIcon letter="1" /></TrayCell>
        <TrayCell><AvastMark /></TrayCell>
        <TrayCell>
          <svg viewBox="0 0 40 40" aria-hidden="true">
            <rect x="1" y="1" width="38" height="38" fill="#3a3a3a" stroke="#bbb" strokeWidth="2" strokeDasharray="3 2" />
            <path d="M7 10H33M7 15H33M7 20H33M7 25H33M7 30H33" stroke="#a8a8a8" strokeWidth="3" strokeDasharray="3 2" />
          </svg>
        </TrayCell>
        <TrayCell>
          <svg viewBox="0 0 40 40" fill="none" stroke="#fff" strokeWidth="2.500" aria-hidden="true">
            <path d="M3 15H7L10 18H17L12 3H17L26 18H34C39 18 39 23 34 23H26L17 38H12L17 23H10L7 26H3L5 20Z" />
          </svg>
        </TrayCell>
        <TrayCell>
          <svg viewBox="0 0 40 40" fill="none" stroke="#fff" strokeWidth="2.500" aria-hidden="true">
            <path d="M14 12H34V30H10V26M34 17H38V25H34" />
            <path d="M3 8V13M9 8V13M1 13H11V18C11 22 1 22 1 18ZM6 21V30H10" />
            <path d="M15 16H22V26H15Z" fill="#fff" />
          </svg>
        </TrayCell>
        <TrayCell>
          <svg viewBox="0 0 40 40" fill="none" stroke="#fff" strokeWidth="2.500" aria-hidden="true">
            <path d="M2 15H9L19 6V34L9 25H2ZM26 15L36 25M36 15L26 25" />
          </svg>
        </TrayCell>
        <TrayCell $width={100}>
          <svg viewBox="0 0 40 40" fill="none" stroke="#fff" strokeWidth="2.500" aria-hidden="true">
            <path d="M12 23L29 3C32 0 38 5 35 8L18 28L11 30Z" />
            <path d="M13 22C6 22 1 27 2 32C4 39 16 37 23 33C28 30 32 26 28 22" />
          </svg>
        </TrayCell>
        <TrayCell $width={92}>ENG</TrayCell>
        <Clock>
          3:19 PM
          <br />
          25/12/2018
        </Clock>
        <TrayCell $width={135} $icon={60}>
          <svg viewBox="0 0 60 60" aria-hidden="true">
            <path d="M2 8H42V40H22L12 50V40H2Z" fill="#fff" />
            <path d="M9 16H35M9 23H35M9 30H35" stroke="#101318" strokeWidth="3" />
            <circle cx="42" cy="42" r="16" fill="#333" stroke="#999" strokeWidth="2" />
            <text x="42" y="51" textAnchor="middle" fill="#fff" fontSize="24" fontFamily="Open Sans">5</text>
          </svg>
        </TrayCell>
      </Tray>
    </Taskbar>
  );
}

export default function App() {
  return (
    <>
      <GlobalStyle />
      <Desktop>
        <IconGrid>
          {shortcuts.map((s) => (
            <Shortcut key={s.label} $row={s.row} $col={s.col}>
              <IconBox>
                {s.icon}
                {s.link && <ShortcutArrow />}
              </IconBox>
              <IconLabel>{s.label}</IconLabel>
            </Shortcut>
          ))}
        </IconGrid>
        <ThrottleStop />
        <FivrWindow>
          <TitleBar $inset={20}>
            <StopIcon />
            <Title>Turbo FIVR Control</Title>
            <CaptionButton $width={68} $color="#000" aria-label="Close">
              <CloseGlyph />
            </CaptionButton>
          </TitleBar>
          <FivrBody>
            <TurboColumn />
            <VoltageColumn />
            <SummaryColumn />
          </FivrBody>
        </FivrWindow>
        <Preview>
          <svg width="40" height="40" viewBox="0 0 60 60" aria-hidden="true">
            <rect width="60" height="60" fill="#000" />
            <path d="M8 30A24 24 0 0 1 52 30" fill="none" stroke="#f6b410" strokeWidth="7" />
          </svg>
        </Preview>
        <TaskbarArea />
      </Desktop>
    </>
  );
}
